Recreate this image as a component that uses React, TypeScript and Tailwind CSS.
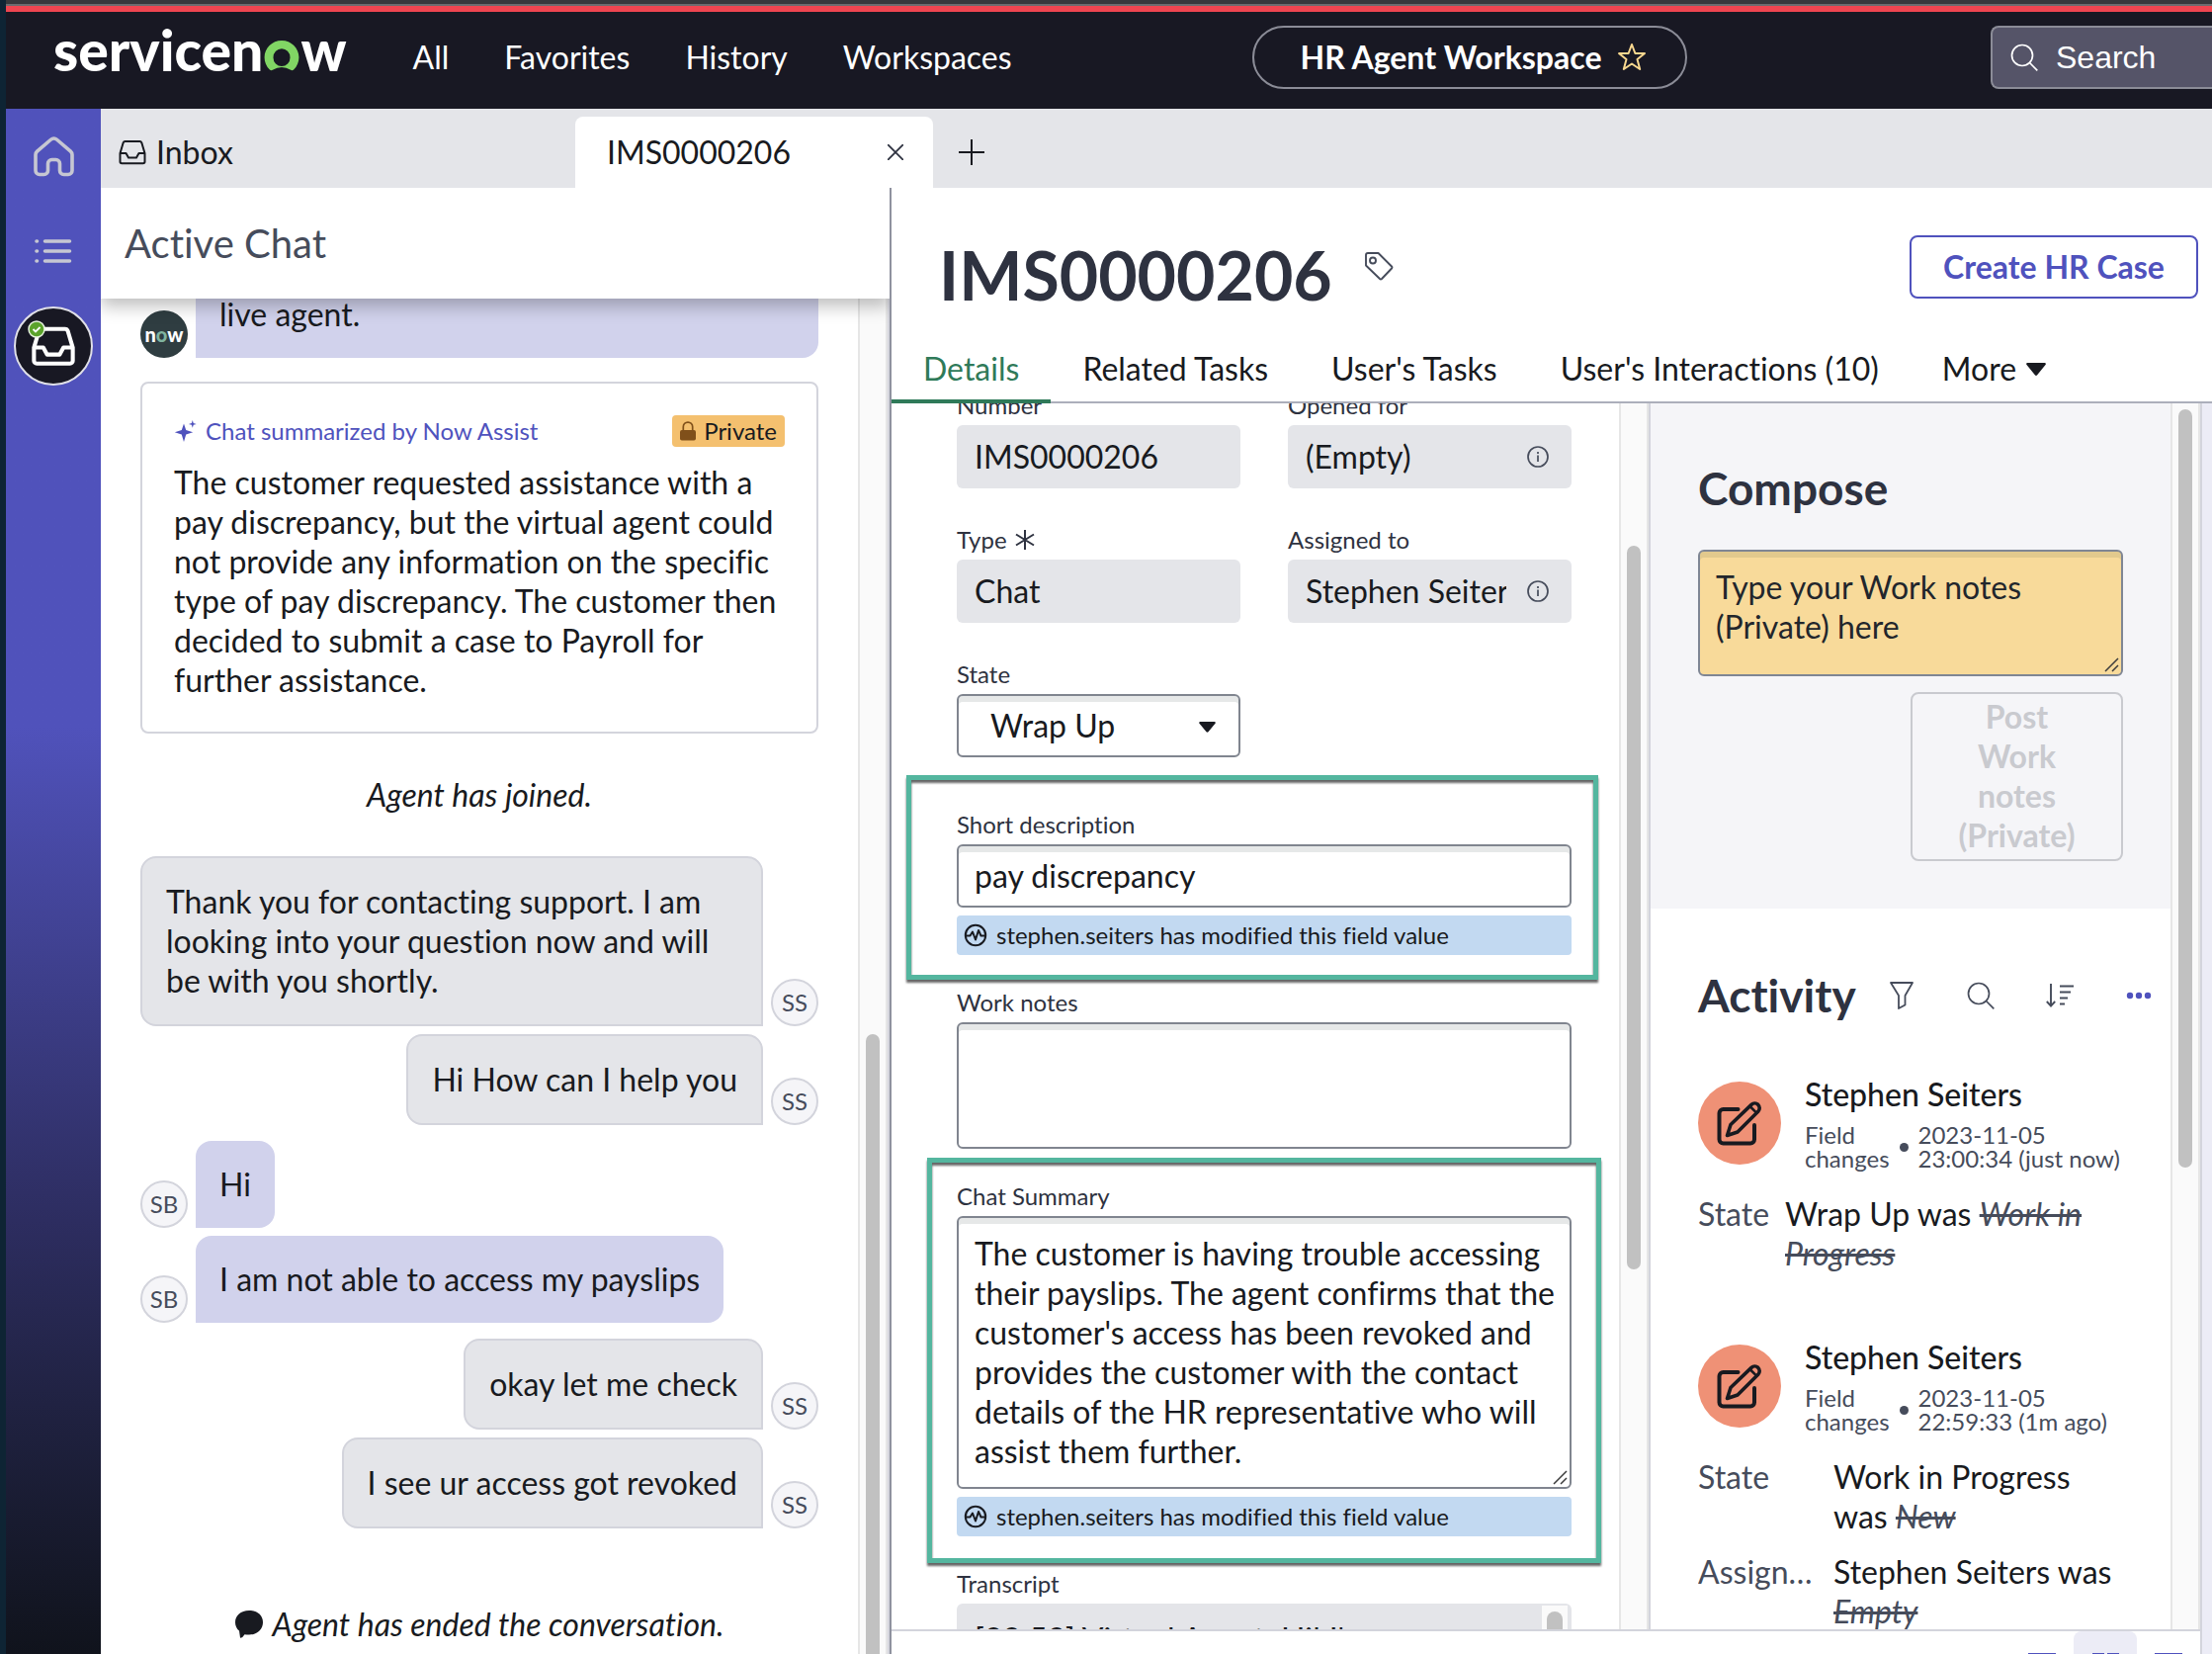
import type { ReactNode } from "react"

const tabs = ["Related Tasks", "User's Tasks", "User's Interactions (10)"]

function ServiceNowLogo() {
  return (
    <a href="#home" aria-label="servicenow" className="-mt-1 flex items-baseline text-[57px] leading-none font-black text-white">
      <span>servicen</span>
      <svg width="36" height="31" viewBox="0 0 36 32" className="mx-px" fill="#81d664" aria-hidden="true">
        <path
          fillRule="evenodd"
          d="M18 0C8 0 0 8 0 17.500C0 22.500 2 27 5.500 30.500Q7 31.800 8.500 30.800Q18 25 27.500 30.800Q29 31.800 30.500 30.500C34 27 36 22.500 36 17.500C36 8 28 0 18 0ZM18 8.500A8.800 9.200 0 1 1 18 26.900A8.800 9.200 0 1 1 18 8.500Z"
        />
      </svg>
      <span>w</span>
    </a>
  )
}

function HomeIcon() {
  return (
    <svg width="41" height="41" viewBox="0 0 41 41" fill="none" stroke="#c6c7d2" strokeWidth="3.600" strokeLinejoin="round">
      <path d="M2 18.500c0-1.300.5-2.500 1.500-3.400L17.700 3a4.200 4.200 0 0 1 5.600 0l14.200 12.100c1 .9 1.500 2.100 1.500 3.400V34.500a4 4 0 0 1-4 4h-4.500a4 4 0 0 1-4-4V27.500a4 4 0 0 0-4-4h-4a4 4 0 0 0-4 4v7a4 4 0 0 1-4 4H6a4 4 0 0 1-4-4z" />
    </svg>
  )
}

function ListIcon() {
  return (
    <svg width="38" height="28" viewBox="0 0 38 28" stroke="#c6c7d2" strokeWidth="3.600" strokeLinecap="round">
      <path d="M2 4h.5M2 14h.5M2 24h.5M10.500 4h25M10.500 14h25M10.500 24h25" />
    </svg>
  )
}

function InboxIcon({ size, stroke }: { size: number; stroke: number }) {
  return (
    <svg width={size} height={size} viewBox="0 0 28 28" fill="none" stroke="currentColor" strokeWidth={stroke} strokeLinejoin="round">
      <path d="M1.500 15 4.700 4.300A2 2 0 0 1 6.600 3h14.800a2 2 0 0 1 1.900 1.300L26.500 15v8.500A1.800 1.800 0 0 1 24.700 25.300H3.300A1.800 1.800 0 0 1 1.500 23.500zM1.500 15h6l2.500 4.500h8l2.500-4.500h6" />
    </svg>
  )
}

function SearchIcon() {
  return (
    <svg width="28" height="28" viewBox="0 0 28 28" fill="none" stroke="currentColor" strokeWidth="1.700" className="shrink-0">
      <circle cx="12" cy="12" r="10.500" />
      <path d="M19.500 19.500 27.300 27.300" />
    </svg>
  )
}

function InfoIcon() {
  return (
    <svg width="24" height="24" viewBox="0 0 24 24" fill="none" stroke="#464c5b" strokeWidth="1.700" className="shrink-0">
      <circle cx="12" cy="12" r="10" />
      <path d="M12 10.500v6.500M12 7v2" />
    </svg>
  )
}

function EditIcon() {
  return (
    <svg width="46" height="46" viewBox="0 0 46 46" fill="none" stroke="#181a20" strokeWidth="4" strokeLinecap="round" strokeLinejoin="round">
      <path d="M21.500 9H6.500A4 4 0 0 0 2.500 13v26.500a4 4 0 0 0 4 4H34a4 4 0 0 0 4-4V25" />
      <path d="m10.500 35.500 3.500-11L35 4.400a4.800 4.800 0 0 1 6.800 6.800L21 32z" strokeWidth="3.600" />
      <path d="m33.500 6 6.700 6.700" strokeWidth="2.500" />
    </svg>
  )
}

function ResizeHandle() {
  return (
    <svg
      width="15"
      height="15"
      viewBox="0 0 15 15"
      fill="none"
      stroke="#3c3c3c"
      strokeWidth="1.500"
      className="pointer-events-none absolute right-1 bottom-1"
    >
      <path d="M14 1 1 14M14 8 8 14" />
    </svg>
  )
}

function Scrollbar({ children }: { children?: ReactNode }) {
  return (
    <div className="flex w-[30px] shrink-0 flex-col border-x-2 border-[#e6e6e6] bg-[#fafafa] px-[6px]">{children}</div>
  )
}

function Avatar({ initials }: { initials: string }) {
  return (
    <span className="flex size-12 shrink-0 items-center justify-center rounded-full border-2 border-[#d3d4dc] bg-[#f5f5f8] text-2xl text-[#464c5b]">
      {initials}
    </span>
  )
}

function AgentMessage({ text }: { text: string }) {
  return (
    <div className="flex items-end justify-end gap-2">
      <p className="rounded-2xl rounded-br-none border-2 border-[#d3d4dc] bg-[#e4e5e9] p-6">{text}</p>
      <Avatar initials="SS" />
    </div>
  )
}

function UserMessage({ text }: { text: string }) {
  return (
    <div className="flex items-end gap-2">
      <Avatar initials="SB" />
      <p className="rounded-2xl rounded-bl-none bg-[#d1d2ec] p-6">{text}</p>
    </div>
  )
}

function Label({ htmlFor, children }: { htmlFor: string; children: ReactNode }) {
  return (
    <label htmlFor={htmlFor} className="mb-1 flex items-center gap-2 text-2xl leading-8 text-[#2e3240]">
      {children}
    </label>
  )
}

function ReadOnlyField({ id, label, value, info, required }: { id: string; label: string; value: string; info?: boolean; required?: boolean }) {
  return (
    <div className="min-w-0">
      <Label htmlFor={id}>
        {label}
        {required && (
          <svg width="20" height="20" viewBox="0 0 20 20" stroke="#2e3240" strokeWidth="2">
            <path d="M10 0v20M1 4.500l18 11M19 4.500l-18 11" />
          </svg>
        )}
      </Label>
      <div className="flex h-16 items-center gap-5 rounded-md bg-[#e4e5e9] pr-[22px] pl-[18px]">
        <input id={id} readOnly defaultValue={value} className="min-w-0 flex-1 bg-transparent outline-none" />
        {info && (
          <button type="button" aria-label={`About ${label}`}>
            <InfoIcon />
          </button>
        )}
      </div>
    </div>
  )
}

function ModifiedNote() {
  return (
    <p className="mt-2 flex h-10 items-center gap-2 rounded bg-[#c2d9f1] pl-[6px] text-2xl">
      <svg width="26" height="26" viewBox="0 0 26 26" fill="none" stroke="#181a20" strokeWidth="2" strokeLinejoin="round">
        <circle cx="13" cy="13" r="10.200" />
        <path d="M3 13.500h4.500l2.500-4 3 8 3-9.500 2.500 5.500H23" />
      </svg>
      stephen.seiters has modified this field value
    </p>
  )
}

function Entry({ date, age, children }: { date: string; age: string; children: ReactNode }) {
  return (
    <li>
      <div className="flex gap-6">
        <span className="mt-2 flex size-[84px] shrink-0 items-center justify-center rounded-full bg-[#ef9176]">
          <EditIcon />
        </span>
        <div>
          <h3 className="leading-[42px] font-medium">Stephen Seiters</h3>
          <div className="mt-2 flex items-center gap-[10px] text-2xl leading-6 text-[#464c5b]">
            <span>
              Field
              <br />
              changes
            </span>
            <span className="size-[9px] rounded-full bg-[#464c5b]" />
            <span>
              {date}
              <br />
              {age}
            </span>
          </div>
        </div>
      </div>
      <dl className="mt-6 flex flex-col gap-4">{children}</dl>
    </li>
  )
}

function Change({ name, wide, value, old }: { name: string; wide?: boolean; value: string; old: string }) {
  return (
    <div className="flex">
      <dt className={wide ? "w-[137px] shrink-0 truncate pr-5 text-[#464c5b]" : "w-[88px] shrink-0 text-[#464c5b]"}>{name}</dt>
      <dd>
        {value} was <s className="text-[#464c5b] italic">{old}</s>
      </dd>
    </div>
  )
}

const fieldBox = "w-full rounded-md border-2 border-[#80858f] bg-white shadow-[inset_0_6px_0_#e6e8e8] outline-none"
const highlight =
  "pointer-events-none absolute border-5 border-[#54b69f] drop-shadow-[0_3px_1px_rgba(0,0,0,0.6)]"

export default function App() {
  return (
    <div className="flex h-screen flex-col overflow-hidden border-l-6 border-[#0e2434] bg-white font-[Lato,sans-serif] text-[32px] leading-10 text-[#181a20] [font-variant-ligatures:none]">
      <div className="h-1 shrink-0 bg-[#37383c]" />
      <div className="h-[2px] shrink-0 bg-[#6b6c6f]" />
      <div className="h-[6px] shrink-0 bg-[#ef4550]" />

      <header className="flex h-[98px] shrink-0 items-start bg-[#181823] pt-[14px] pl-12 text-white">
        <ServiceNowLogo />
        <nav className="ml-[67px] flex h-16 items-center gap-14">
          <a href="#all">All</a>
          <a href="#favorites">Favorites</a>
          <a href="#history">History</a>
          <a href="#workspaces">Workspaces</a>
        </nav>
        <button className="ml-auto flex h-16 w-[440px] items-center justify-center gap-4 rounded-full border-2 border-[#8b8c97] pl-2 font-bold">
          HR Agent Workspace
          <svg width="30" height="30" viewBox="0 0 30 30" fill="none" stroke="#f9d88f" strokeWidth="2" strokeLinejoin="round">
            <path d="m15 2 3.400 9H28l-7.500 6 2.700 10L15 21.500 6.800 27l2.700-10L2 11h9.600z" />
          </svg>
        </button>
        <label className="ml-[307px] flex h-16 w-[224px] shrink-0 items-center gap-[18px] rounded-l-lg border-2 border-r-0 border-[#8b8c97] bg-[#555468] pl-[18px]">
          <SearchIcon />
          <input
            aria-label="Search"
            placeholder="Search"
            className="w-full min-w-0 font-['Liberation_Sans',sans-serif] outline-none placeholder:text-white"
          />
        </label>
      </header>

      <div className="flex min-h-0 flex-1">
        <aside className="flex w-24 shrink-0 flex-col items-center bg-linear-to-b from-[#5052bb] from-40% via-[#2d2d60] via-72% to-[#10131c] pt-7">
          <a href="#home" aria-label="Home">
            <HomeIcon />
          </a>
          <a href="#lists" aria-label="Lists" className="mt-[61px]">
            <ListIcon />
          </a>
          <a
            href="#inbox"
            aria-label="Inbox"
            className="relative mt-[42px] flex size-20 items-center justify-center rounded-full border-2 border-[#e0e0e8] bg-[#181823] text-white"
          >
            <InboxIcon size={44} stroke={2.6} />
            <svg width="18" height="18" viewBox="0 0 18 18" className="absolute top-3 left-3">
              <circle cx="9" cy="9" r="8" fill="#5ba32b" stroke="#e8f3e0" strokeWidth="1.500" />
              <path d="m5.500 9 2.500 2.500 4.500-4.500" fill="none" stroke="#fff" strokeWidth="1.800" />
            </svg>
          </a>
        </aside>

        <main className="flex min-w-0 flex-1 flex-col">
          <div className="flex h-20 shrink-0 items-end bg-[#e4e5e9]">
            <button className="flex h-[72px] w-[480px] items-center gap-[10px] pl-[18px]">
              <InboxIcon size={28} stroke={2} />
              Inbox
            </button>
            <div className="flex h-[72px] w-[362px] items-center justify-between rounded-t-lg bg-white pr-[30px] pl-8">
              <button>IMS0000206</button>
              <button aria-label="Close tab">
                <svg width="16" height="16" viewBox="0 0 16 16" stroke="#2e3240" strokeWidth="1.800">
                  <path d="m0 0 16 16M16 0 0 16" />
                </svg>
              </button>
            </div>
            <button aria-label="New tab" className="flex h-[72px] items-center pl-[26px]">
              <svg width="26" height="26" viewBox="0 0 26 26" stroke="#181a20" strokeWidth="2">
                <path d="M13 0v26M0 13h26" />
              </svg>
            </button>
          </div>

          <div className="flex min-h-0 flex-1">
            <section className="flex w-[800px] shrink-0 flex-col overflow-hidden border-r-2 border-[#8f929f]">
              <h2 className="z-10 flex h-28 shrink-0 items-center bg-white pl-6 text-[40px] text-[#464c5b] shadow-[0_8px_16px_rgba(0,0,0,0.25)]">
                Active Chat
              </h2>
              <div className="flex min-h-0 flex-1 border-r-2 border-[#d6d6de]">
                <div className="min-w-0 flex-1 overflow-hidden px-10">
                  <div className="-mt-1 flex items-end gap-2">
                    <span className="flex size-12 shrink-0 items-center justify-center rounded-full bg-[#2f3d41] text-xl font-black text-white">
                      n<span className="text-[#7fb39f]">o</span>w
                    </span>
                    <p className="flex-1 rounded-br-2xl bg-[#d1d2ec] px-6 pb-6">live agent.</p>
                  </div>

                  <article className="mt-6 rounded-lg border-2 border-[#d3d4dc] p-8">
                    <div className="mb-4 flex h-8 items-center justify-between text-2xl">
                      <span className="flex items-center gap-2 text-[#4f52bd]">
                        <svg width="24" height="24" viewBox="0 0 24 24" fill="#4f52bd">
                          <path d="M10 4.500 12.200 11l7 2.300-7 2.200L10 23l-2.200-7.500-7-2.200L7.800 11zM18.800 1l.9 3 3 .9-3 .9-.9 3-.9-3-3-.9 3-.9z" />
                        </svg>
                        Chat summarized by Now Assist
                      </span>
                      <span className="flex h-8 items-center gap-2 rounded bg-[#f4c06f] px-2">
                        <svg width="16" height="22" viewBox="0 0 17 22">
                          <rect x="0" y="10" width="17" height="11" rx="2" fill="#80501a" />
                          <path d="M3.500 10V6.500a5 5 0 0 1 10 0V10" fill="none" stroke="#80501a" strokeWidth="1.800" />
                        </svg>
                        Private
                      </span>
                    </div>
                    <p>
                      The customer requested assistance with a pay discrepancy, but the virtual agent could not provide any
                      information on the specific type of pay discrepancy. The customer then decided to submit a case to Payroll
                      for further assistance.
                    </p>
                  </article>

                  <p className="py-[42px] text-center italic">Agent has joined.</p>

                  <div className="flex flex-col gap-2">
                    <AgentMessage text="Thank you for contacting support. I am looking into your question now and will be with you shortly." />
                    <AgentMessage text="Hi How can I help you" />
                  </div>
                  <div className="mt-4 flex flex-col gap-2">
                    <UserMessage text="Hi" />
                    <UserMessage text="I am not able to access my payslips" />
                  </div>
                  <div className="mt-4 flex flex-col gap-2">
                    <AgentMessage text="okay let me check" />
                    <AgentMessage text="I see ur access got revoked" />
                  </div>

                  <p className="mt-[77px] flex items-center justify-center gap-2 italic">
                    <svg width="30" height="28" viewBox="0 0 30 28" fill="#181a20">
                      <path d="M15 0C6.500 0 1 5.200 1 12c0 3.600 1.500 6.500 4 8.600L6 27.500q2 .8 4.500-3.200c1.400.2 2.900.2 4.500.2 8.500 0 14-5.500 14-12.500S23.500 0 15 0z" />
                    </svg>
                    Agent has ended the conversation.
                  </p>
                </div>
                <Scrollbar>
                  <div className="mt-[744px] w-full flex-1 rounded-t-full bg-[#c1c1c1]" />
                </Scrollbar>
              </div>
            </section>

            <section className="flex min-w-0 flex-1 flex-col">
              <div className="flex items-start pt-12 pr-[14px] pl-12">
                <h1 className="text-[68px] leading-[80px] font-bold text-[#2e3240]">IMS0000206</h1>
                <button aria-label="Add tag" className="mt-4 ml-8">
                  <svg width="30" height="30" viewBox="0 0 30 30" fill="none" stroke="#464c5b" strokeWidth="1.900" strokeLinejoin="round">
                    <path d="M2 4a2 2 0 0 1 2-2h10.500L28 15.500a1.500 1.500 0 0 1 0 2L18 28a1.500 1.500 0 0 1-2 0L2 14.500z" />
                    <circle cx="9" cy="9.500" r="3" />
                  </svg>
                </button>
                <button className="ml-auto h-16 w-[292px] rounded-lg border-2 border-[#4f52bd] font-bold text-[#4f52bd]">
                  Create HR Case
                </button>
              </div>

              <nav className="mt-[26px] flex h-16 shrink-0 border-b-2 border-[#acafbb]">
                <a href="#details" className="-mb-[2px] border-b-4 border-[#2f7a59] px-8 pt-[9px] text-[#2f7a59]">
                  Details
                </a>
                {tabs.map((tab) => (
                  <a key={tab} href="#tab" className="px-8 pt-[9px]">
                    {tab}
                  </a>
                ))}
                <button className="flex items-center gap-[10px] self-start px-8 pt-[9px]">
                  More
                  <svg width="20" height="13" viewBox="0 0 20 13" fill="#181a20">
                    <path d="M1 0h18q1.500.5.500 2L11 12.500q-1 .8-2 0L.5 2Q-.5.500 1 0z" />
                  </svg>
                </button>
              </nav>

              <div className="flex min-h-0 flex-1">
                <div className="flex min-w-0 flex-1 flex-col">
                  <div className="flex min-h-0 flex-1">
                    <form className="min-w-0 flex-1 overflow-hidden pr-12 pl-[66px]">
                      <div className="-mt-[14px] grid grid-cols-2 gap-x-12 gap-y-9">
                        <ReadOnlyField id="number" label="Number" value="IMS0000206" />
                        <ReadOnlyField id="opened-for" label="Opened for" value="(Empty)" info />
                        <ReadOnlyField id="type" label="Type" value="Chat" required />
                        <ReadOnlyField id="assigned-to" label="Assigned to" value="Stephen Seiters" info />
                        <div>
                          <Label htmlFor="state">State</Label>
                          <div className="relative">
                            <select id="state" className={`${fieldBox} block h-16 appearance-none px-8`}>
                              <option>Wrap Up</option>
                            </select>
                            <svg width="17" height="11" viewBox="0 0 17 11" fill="#181a20" className="pointer-events-none absolute top-7 right-[25px]">
                              <path d="M1 0h15q1.300.5.500 1.800L9.500 10.300q-1 .8-2 0L.5 1.800Q-.3.500 1 0z" />
                            </svg>
                          </div>
                        </div>
                      </div>

                      <div className="relative mt-[52px]">
                        <Label htmlFor="short-description">Short description</Label>
                        <input id="short-description" defaultValue="pay discrepancy" className={`${fieldBox} block h-16 px-4 pb-[2px]`} />
                        <ModifiedNote />
                        <div className={`${highlight} -top-[34px] -right-[27px] -bottom-[25px] -left-[51px]`} />
                      </div>

                      <div className="mt-8">
                        <Label htmlFor="work-notes">Work notes</Label>
                        <textarea id="work-notes" className={`${fieldBox} block h-32 resize-none p-4`} />
                      </div>

                      <div className="relative mt-8">
                        <Label htmlFor="chat-summary">Chat Summary</Label>
                        <div className="relative">
                          <textarea
                            id="chat-summary"
                            rows={6}
                            className={`${fieldBox} block resize-none overflow-hidden py-4 pr-3 pl-4`}
                            defaultValue="The customer is having trouble accessing their payslips. The agent confirms that the customer's access has been revoked and provides the customer with the contact details of the HR representative who will assist them further."
                          />
                          <ResizeHandle />
                        </div>
                        <ModifiedNote />
                        <div className={`${highlight} -top-[23px] -right-[30px] -bottom-[27px] -left-[30px]`} />
                      </div>

                      <div className="mt-8">
                        <Label htmlFor="transcript">Transcript</Label>
                        <div className="flex h-32 overflow-hidden rounded-md bg-[#e4e5e9]">
                          <textarea
                            id="transcript"
                            readOnly
                            className="min-w-0 flex-1 resize-none overflow-hidden py-4 pl-[18px] outline-none"
                            defaultValue="[22:53] Virtual Agent: Hi! I'm"
                          />
                          <div className="mt-[2px] mr-1 w-[26px] bg-[#fafafa] px-[5px] pt-[6px]">
                            <div className="h-full rounded-full bg-[#c1c1c1]" />
                          </div>
                        </div>
                      </div>
                    </form>
                    <Scrollbar>
                      <div className="mt-36 h-[732px] w-full rounded-full bg-[#c1c1c1]" />
                    </Scrollbar>

                    <aside className="flex w-[558px] shrink-0 border-l-2 border-[#d3d4dc]">
                      <div className="min-w-0 flex-1 overflow-hidden">
                        <section className="flex flex-col bg-[#f5f5f8] px-12 pt-14 pb-12">
                          <h2 className="mb-8 text-[46px] leading-[60px] font-bold text-[#2e3240]">Compose</h2>
                          <div className="relative">
                            <textarea
                              aria-label="Work notes (Private)"
                              placeholder="Type your Work notes (Private) here"
                              className="block h-32 w-full resize-none overflow-hidden rounded-md border-2 border-[#7f8694] bg-[#f8da9a] p-4 shadow-[inset_0_6px_0_#e2c98d] outline-none placeholder:text-[#22262c]"
                            />
                            <ResizeHandle />
                          </div>
                          <button
                            disabled
                            className="mt-4 w-1/2 self-end rounded-lg border-2 border-[#c9cacf] px-10 pt-[3px] pb-1 font-bold text-[#c9cacf]"
                          >
                            Post Work notes (Private)
                          </button>
                        </section>

                        <section>
                          <div className="mt-14 flex h-16 items-center pl-12">
                            <h2 className="text-[46px] leading-[60px] font-bold text-[#2e3240]">Activity</h2>
                            <div className="ml-auto flex gap-4 text-[#464c5b]">
                              <button aria-label="Filter" className="flex size-16 items-center justify-center">
                                <svg width="26" height="28" viewBox="0 0 26 28" fill="none" stroke="currentColor" strokeWidth="1.800" strokeLinejoin="round">
                                  <path d="M2 1h22l-7.500 13v9.500L10 27V14z" />
                                </svg>
                              </button>
                              <button aria-label="Search activity" className="flex size-16 items-center justify-center">
                                <SearchIcon />
                              </button>
                              <button aria-label="Sort" className="flex size-16 items-center justify-center">
                                <svg width="28" height="26" viewBox="0 0 28 26" fill="none" stroke="currentColor" strokeWidth="1.900">
                                  <path d="M5 1v22M.8 19 5 23.500 9.200 19M14 3.500h14M14 9.500h11M14 15.500h8M14 21.500h5" />
                                </svg>
                              </button>
                              <button aria-label="More actions" className="flex size-16 items-center justify-center">
                                <svg width="26" height="8" viewBox="0 0 26 8" fill="#4f52bd">
                                  <circle cx="4" cy="4" r="3.200" />
                                  <circle cx="13" cy="4" r="3.200" />
                                  <circle cx="22" cy="4" r="3.200" />
                                </svg>
                              </button>
                            </div>
                          </div>
                          <ul className="mt-[47px] flex flex-col gap-16 px-12">
                            <Entry date="2023-11-05" age="23:00:34 (just now)">
                              <Change name="State" value="Wrap Up" old="Work in Progress" />
                            </Entry>
                            <Entry date="2023-11-05" age="22:59:33 (1m ago)">
                              <Change name="State" wide value="Work in Progress" old="New" />
                              <Change name="Assigned to" wide value="Stephen Seiters" old="Empty" />
                            </Entry>
                          </ul>
                        </section>
                      </div>
                      <Scrollbar>
                        <div className="mt-[6px] h-[767px] w-full rounded-full bg-[#c1c1c1]" />
                      </Scrollbar>
                    </aside>
                  </div>

                  <footer className="flex h-[25px] shrink-0 justify-end overflow-hidden border-t-2 border-[#d3d4dc]">
                    <button aria-label="Single pane" className="flex w-16 justify-center pt-[22px]">
                      <span className="h-1 w-7 bg-[#4f52bd]" />
                    </button>
                    <button aria-label="Split pane" className="flex w-16 justify-center gap-[3px] rounded-t-lg bg-[#ececf6] pt-[22px]">
                      <span className="h-1 w-3 bg-[#4f52bd]" />
                      <span className="h-1 w-3 bg-[#4f52bd]" />
                    </button>
                    <button aria-label="Side pane" className="flex w-16 justify-center pt-[22px]">
                      <span className="h-1 w-7 bg-[#4f52bd]" />
                    </button>
                  </footer>
                </div>
                <div className="w-3 shrink-0 border-l-2 border-[#d3d4dc] bg-[#ececf6]" />
              </div>
            </section>
          </div>
        </main>
      </div>
    </div>
  )
}
